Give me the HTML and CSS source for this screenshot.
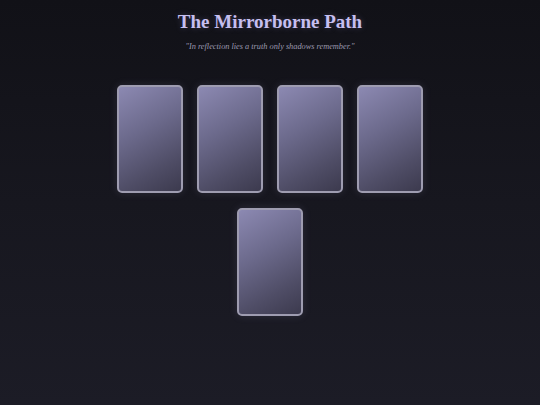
FILE: index.html
```html
<!DOCTYPE html>
<html>
<head>
<meta charset="utf-8">
<link rel="stylesheet" href="styles.css">
</head>
<body>
<main class="page">
  <header class="head">
    <h1 class="title">The Mirrorborne Path</h1>
    <p class="quote">"In reflection lies a truth only shadows remember."</p>
  </header>
  <section class="spread">
    <div class="card"></div>
    <div class="card"></div>
    <div class="card"></div>
    <div class="card"></div>
    <div class="card"></div>
  </section>
</main>
</body>
</html>
```
FILE: styles.css
```css
html, body {
  margin: 0;
  padding: 0;
  height: 100%;
}
body {
  background: linear-gradient(180deg, #111117 0%, #17171f 50%, #1c1c26 100%);
  font-family: "Liberation Serif", "DejaVu Serif", serif;
}
.page {
  display: flex;
  flex-direction: column;
  align-items: center;
  padding-top: 11px;
}
.head {
  text-align: center;
}
.title {
  margin: 0;
  font-size: 19px;
  font-weight: bold;
  color: #c6bff0;
  line-height: 22px;
  text-shadow: 0 0 6px rgba(180, 170, 240, 0.25);
}
.quote {
  margin: 9px 0 0;
  font-size: 8.3px;
  font-style: italic;
  color: #9c9ab0;
  line-height: 10px;
}
.spread {
  margin-top: 33px;
  width: 310px;
  display: flex;
  flex-wrap: wrap;
  justify-content: center;
  gap: 15px 14px;
}
.card {
  width: 62px;
  height: 104px;
  border: 2px solid #9e9cb0;
  border-radius: 5px;
  background: linear-gradient(150deg, #8c89b2 0%, #6c6a8c 40%, #4f4d66 75%, #3c3a4e 100%);
  box-shadow: 0 0 8px rgba(160, 155, 200, 0.16);
}
```
